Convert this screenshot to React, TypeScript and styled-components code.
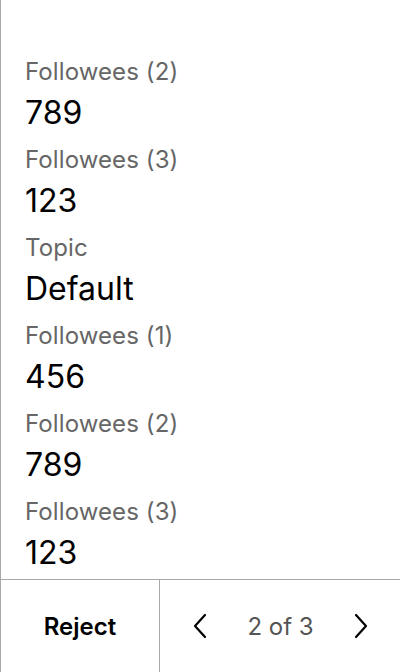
import styled, { createGlobalStyle } from "styled-components";

const GlobalStyle = createGlobalStyle`
  html, body {
    margin: 0;
    padding: 0;
    background: #ffffff;
  }
  body {
    font-family: Inter, "Noto Sans", sans-serif;
  }
`;

const fields = [
  { label: "Followees (2)", value: "789" },
  { label: "Followees (3)", value: "123" },
  { label: "Topic", value: "Default" },
  { label: "Followees (1)", value: "456" },
  { label: "Followees (2)", value: "789" },
  { label: "Followees (3)", value: "123" },
];

function Chevron({ dir }: { dir: "left" | "right" }) {
  return (
    <svg width="16" height="26" viewBox="0 0 16 26" fill="none">
      <path
        d={dir === "left" ? "M13 2 L3 13 L13 24" : "M3 2 L13 13 L3 24"}
        stroke="#000"
        strokeWidth="2.2"
        strokeLinecap="round"
        strokeLinejoin="round"
      />
    </svg>
  );
}

export default function App() {
  return (
    <>
      <GlobalStyle />
      <Screen>
        <Scroll>
          {fields.map((f, i) => (
            <Field key={i}>
              <Label>{f.label}</Label>
              <Value>{f.value}</Value>
            </Field>
          ))}
        </Scroll>
        <Footer>
          <RejectButton>Reject</RejectButton>
          <Pager>
            <NavButton>
              <Chevron dir="left" />
            </NavButton>
            <PageCount>2 of 3</PageCount>
            <NavButton>
              <Chevron dir="right" />
            </NavButton>
          </Pager>
        </Footer>
      </Screen>
    </>
  );
}

const Screen = styled.div`
  width: 400px;
  height: 672px;
  display: flex;
  flex-direction: column;
  border-left: 1px solid #a8a8a8;
  box-sizing: border-box;
  overflow: hidden;
`;

const Scroll = styled.div`
  flex: 1;
  overflow: hidden;
  padding: 56px 24px 0;
`;

const Field = styled.div`
  display: flex;
  flex-direction: column;
  margin-bottom: 11px;
`;

const Label = styled.div`
  font-size: 24px;
  line-height: 32px;
  letter-spacing: 0.1px;
  color: #666666;
`;

const Value = styled.div`
  font-size: 32px;
  line-height: 40px;
  margin-top: 5px;
  color: #000000;
`;

const Footer = styled.div`
  height: 92px;
  flex-shrink: 0;
  display: grid;
  grid-template-columns: 159px 1fr;
  border-top: 1px solid #a8a8a8;
`;

const RejectButton = styled.div`
  display: flex;
  align-items: center;
  justify-content: center;
  font-size: 24px;
  font-weight: 600;
  color: #000000;
  border-right: 1px solid #a8a8a8;
`;

const Pager = styled.div`
  display: flex;
  align-items: center;
  justify-content: space-between;
  padding: 0 29px 0 30px;
`;

const NavButton = styled.div`
  display: flex;
  align-items: center;
  justify-content: center;
  width: 20px;
  height: 30px;
`;

const PageCount = styled.div`
  font-size: 24px;
  color: #555555;
`;
